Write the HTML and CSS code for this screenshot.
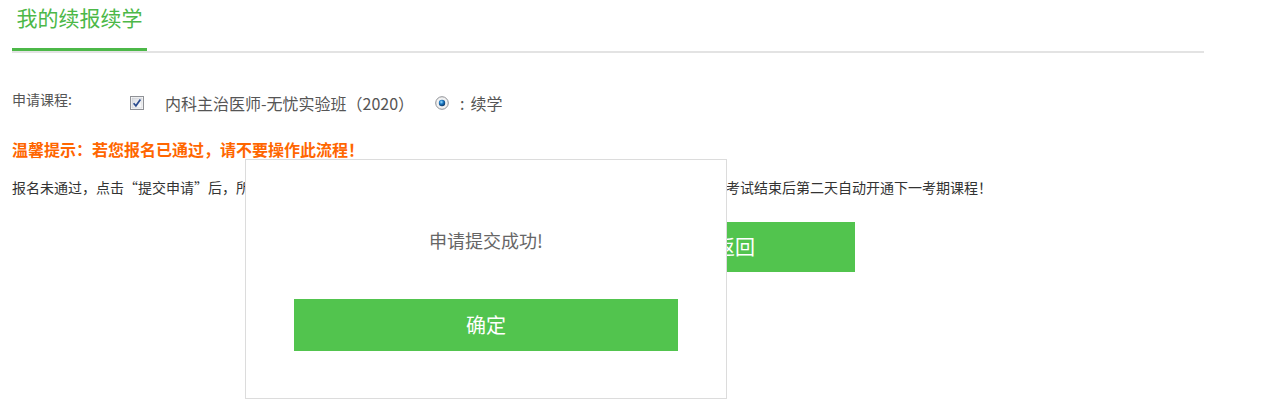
FILE: index.html
```html
<!DOCTYPE html>
<html>
<head>
<meta charset="utf-8">
<title>我的续报续学</title>
<link rel="stylesheet" href="styles.css">
</head>
<body>
<div class="page">
  <div class="tabs">
    <span class="tab">我的续报续学</span>
  </div>

  <div class="apply-row">
    <span class="apply-label">申请课程:</span>
    <span class="course">
      <svg class="check" width="14" height="14" viewBox="0 0 14 14">
        <defs>
          <linearGradient id="cb" x1="0" y1="0" x2="1" y2="1">
            <stop offset="0" stop-color="#d8dadf"/>
            <stop offset="1" stop-color="#ffffff"/>
          </linearGradient>
        </defs>
        <rect x="0.5" y="0.5" width="13" height="13" fill="#fff" stroke="#8f9196"/>
        <rect x="2" y="2" width="10" height="10" fill="url(#cb)" stroke="#c3c6cc" stroke-width="0.6"/>
        <path d="M3.6 7.2 L5.9 9.8 L10.4 3.6" fill="none" stroke="#2b4c8f" stroke-width="1.7"/>
      </svg>
      <span class="course-name">内科主治医师-无忧实验班（2020）</span>
    </span>
    <span class="mode">
      <svg class="radio" width="14" height="14" viewBox="0 0 14 14">
        <defs>
          <radialGradient id="rb" cx="0.4" cy="0.35" r="0.7">
            <stop offset="0" stop-color="#9fe0ff"/>
            <stop offset="0.45" stop-color="#1b78c4"/>
            <stop offset="1" stop-color="#0b2f5a"/>
          </radialGradient>
        </defs>
        <circle cx="7" cy="7" r="6.3" fill="#f2f2f2" stroke="#8f9196"/>
        <circle cx="7" cy="7" r="3.2" fill="url(#rb)"/>
      </svg>
      <span class="colon">:</span><span>续学</span>
    </span>
  </div>

  <p class="warn">温馨提示：若您报名已通过，请不要操作此流程！</p>
  <p class="note">报名未通过，点击“提交申请”后，所选课程将进入审核，审核通过后系统将会为您保留全部学习记录，并于本年度考试结束后第二天自动开通下一考期课程！</p>

  <a class="btn back-btn" href="#">返回</a>
</div>

<div class="dialog">
  <p class="dialog-msg">申请提交成功!</p>
  <a class="btn ok-btn" href="#">确定</a>
</div>
</body>
</html>
```

FILE: styles.css
```css
body {
  margin: 0;
  font-family: "Noto Sans CJK SC", "Liberation Sans", sans-serif;
  color: #333;
  background: #fff;
}
p { margin: 0; }

.page {
  width: 1192px;
  margin-left: 12px;
}

.tabs {
  height: 51px;
  border-bottom: 2px solid #e3e3e3;
}
.tab {
  display: block;
  width: 135px;
  height: 48px;
  line-height: 34px;
  text-align: center;
  font-size: 21px;
  color: #4cb848;
  border-bottom: 3px solid #4cb848;
}

.apply-row {
  display: flex;
  align-items: flex-start;
  margin-top: 36px;
  color: #555;
}
.apply-label {
  width: 118px;
  font-size: 14px;
  line-height: 20px;
}
.course, .mode {
  display: flex;
  align-items: center;
  margin-top: 3px;
  font-size: 16px;
  line-height: 22px;
}
.check { margin-right: 21px; }
.course-name { margin-right: 21px; }
.radio { margin-right: 11px; }
.colon { margin-right: 6px; }

.warn {
  margin-top: 24px;
  font-size: 16px;
  font-weight: bold;
  line-height: 22px;
  color: #ff6600;
}
.note {
  margin-top: 17px;
  font-size: 14px;
  line-height: 20px;
  color: #333;
}

.btn {
  display: block;
  text-align: center;
  color: #fff;
  font-size: 20px;
  text-decoration: none;
  background: #52c44e;
}
.back-btn {
  width: 240px;
  height: 50px;
  line-height: 50px;
  margin: 25px 0 0 603px;
}

.dialog {
  position: absolute;
  left: 245px;
  top: 159px;
  width: 480px;
  padding: 68px 0 47px;
  background: #fff;
  border: 1px solid #dcdcdc;
}
.dialog-msg {
  text-align: center;
  font-size: 18px;
  line-height: 24px;
  color: #666;
}
.ok-btn {
  width: 384px;
  height: 52px;
  line-height: 52px;
  margin: 47px auto 0;
}
```
